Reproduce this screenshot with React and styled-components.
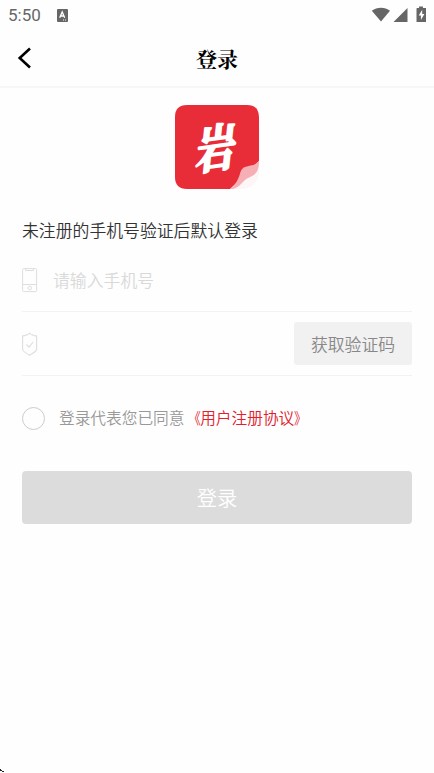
import React, { useState } from "react";
import styled, { createGlobalStyle } from "styled-components";

const GlobalStyle = createGlobalStyle`
  * {
    box-sizing: border-box;
  }
  body {
    margin: 0;
    background: #fff;
    font-family: "Noto Sans CJK SC", sans-serif;
    font-weight: 350;
    overflow: hidden;
  }
`;

const Screen = styled.div`
  position: relative;
  display: flex;
  flex-direction: column;
  height: 773px;
  background: #fefefe;
`;

const StatusBar = styled.div`
  display: flex;
  align-items: center;
  height: 30px;
  padding: 0 7px 0 8px;
  color: #666;
  font: 400 17px/30px Roboto, sans-serif;
  svg {
    display: block;
  }
`;

const Clock = styled.span`
  width: 49px;
`;

const StatusIcons = styled.div`
  display: flex;
  margin-left: auto;
`;

const Header = styled.header`
  display: grid;
  grid-template-columns: 60px 1fr 60px;
  align-items: center;
  height: 58px;
  border-bottom: 2px solid #f7f7f7;
`;

const BackButton = styled.button`
  display: flex;
  padding: 0 0 0 17px;
  border: 0;
  background: none;
`;

const Title = styled.h1`
  margin: 0;
  font: 700 21px/30px "Noto Serif CJK SC", "Noto Sans CJK SC", serif;
  color: #000;
  text-align: center;
`;

const Form = styled.form`
  display: flex;
  flex-direction: column;
  padding: 17px 22px 0;
`;

const Logo = styled.svg`
  display: block;
  align-self: center;
  overflow: visible;
`;

const Hint = styled.p`
  margin: 28px 0 0;
  font-size: 16.85px;
  line-height: 26px;
  color: #333;
`;

const Field = styled.div`
  display: flex;
  align-items: center;
  height: ${({ $height }) => $height}px;
  padding-top: ${({ $offset }) => $offset || 0}px;
  border-bottom: 1px solid #f2f2f2;
`;

const Input = styled.input`
  flex: 1;
  min-width: 0;
  margin-left: 15px;
  padding: 0;
  border: 0;
  outline: 0;
  background: none;
  font: 350 16.85px/26px "Noto Sans CJK SC", sans-serif;
  color: #333;
  &::placeholder {
    color: #d9d9d9;
    opacity: 1;
  }
`;

const CodeButton = styled.button`
  width: 118px;
  height: 43px;
  padding: 0;
  border: 0;
  border-radius: 3px;
  background: #f1f1f1;
  color: #888;
  font: 350 16.85px/42px "Noto Sans CJK SC", sans-serif;
`;

const Agreement = styled.div`
  display: flex;
  align-items: center;
  margin-top: 30px;
  height: 24px;
  font-size: 15.7px;
  line-height: 24px;
  color: #999;
  white-space: nowrap;
`;

const Radio = styled.span`
  width: 23px;
  height: 23px;
  margin-right: 14px;
  border: 1.5px solid ${({ $checked }) => ($checked ? "#e82d38" : "#ccc")};
  border-radius: 50%;
`;

const Link = styled.span`
  color: #e1202c;
`;

const Bracket = styled.span`
  display: inline-block;
  transform: scaleX(0.8);
  transform-origin: ${({ $open }) => ($open ? "right" : "left")} center;
`;

const Submit = styled.button`
  height: 53px;
  margin-top: 41px;
  padding: 0 0 2px;
  border: 0;
  border-radius: 4px;
  background: #dcdcdc;
  color: #fff;
  font: 350 20.3px/50px "Noto Sans CJK SC", sans-serif;
`;

const Corner = styled.svg`
  position: absolute;
  left: 0;
  bottom: 0;
`;

const KeyboardIcon = () => (
  <svg width="11" height="13" viewBox="0 0 11 13">
    <rect width="11" height="13" rx="1" fill="#666" />
    <path d="M2.7 8.8 5.2 3 7.7 8.8M3.6 7H6.8" fill="none" stroke="#fff" strokeWidth="1.3" />
    <path d="M6 11h1M8 11h1" stroke="#fff" />
  </svg>
);

const SignalIcons = () => (
  <svg width="56" height="18" viewBox="0 0 56 18" fill="#666">
    <path d="M.8 4.8C6 .8 14 .8 19 4.8L10 15.5z" />
    <path d="M36.5 2V16H22.5z" />
    <path d="M46 2h2V.5h4V2h3V16H45.5V3q0-1 .5-1z" />
    <path d="M51.2 3.8 47.7 9.5h2.2v4.5L53.4 8h-2.2z" fill="#fff" />
  </svg>
);

const PhoneIcon = () => (
  <svg width="16" height="25" viewBox="0 0 16 25" fill="none" stroke="#dedede">
    <rect x=".6" y=".6" width="14" height="23" rx="1" />
    <path d="M3.5 1v1.5h8V1M.5 16.5h14" />
    <circle cx="7.7" cy="20" r="1.8" />
  </svg>
);

const ShieldIcon = () => (
  <svg width="16" height="24" viewBox="0 0 16 24" fill="none" stroke="#dedede" strokeWidth="1.1">
    <path d="M.6 3.8Q3 4 4.5 2.8Q5.5 3.5 7.6 1Q9.6 3.5 10.8 2.8Q12 4 14.6 3.8V17.5Q14 19.5 7.6 23.3Q1 19.5 .6 17.5z" />
    <path d="m4.5 12.5 2.6 2.7 4-5.2" />
  </svg>
);

const BrandLogo = () => (
  <Logo width="84" height="84" viewBox="0 0 84 84">
    <path d="M12 0H72Q84 0 84 12V57L57 84H12Q0 84 0 72V12Q0 0 12 0z" fill="#e82d38" />
    <path d="M84 56V68Q82 82 68 84H55z" fill="#fdf5f6" />
    <path
      d="M84 56C80 61 75 60 70 62C65 64 66 68 63 74C61 78 59 82 55 84L58 84C65 82 67 77 72 73.5C79 70 84 69 84 56z"
      fill="#f6b0b5"
    />
    <text
      x="0"
      y="0"
      fill="#fff"
      stroke="#fff"
      strokeWidth="2.2"
      strokeLinejoin="round"
      fontFamily="Noto Serif CJK SC, Noto Sans CJK SC, serif"
      fontSize="46"
      fontWeight="700"
      textAnchor="middle"
      transform="translate(39.5 62) rotate(-8) skewX(-14) scale(.86 1.08)"
    >
      岩
    </text>
  </Logo>
);

const App = () => {
  const [phone, setPhone] = useState("");
  const [code, setCode] = useState("");
  const [checked, setChecked] = useState(false);

  return (
    <Screen>
      <GlobalStyle />
      <StatusBar>
        <Clock>5:50</Clock>
        <KeyboardIcon />
        <StatusIcons>
          <SignalIcons />
        </StatusIcons>
      </StatusBar>
      <Header>
        <BackButton>
          <svg width="16" height="24" viewBox="0 0 16 24" fill="none" stroke="#000" strokeWidth="2.6">
            <path d="M13 2.5 2.7 12 13 21.5" />
          </svg>
        </BackButton>
        <Title>登录</Title>
      </Header>
      <Form onSubmit={(event) => event.preventDefault()}>
        <BrandLogo />
        <Hint>未注册的手机号验证后默认登录</Hint>
        <Field $height={69} $offset={6}>
          <PhoneIcon />
          <Input
            placeholder="请输入手机号"
            value={phone}
            onChange={(event) => setPhone(event.target.value)}
          />
        </Field>
        <Field $height={64}>
          <ShieldIcon />
          <Input value={code} onChange={(event) => setCode(event.target.value)} />
          <CodeButton type="button">获取验证码</CodeButton>
        </Field>
        <Agreement onClick={() => setChecked(!checked)}>
          <Radio $checked={checked} />
          登录代表您已同意
          <Link>
            <Bracket $open>《</Bracket>用户注册协议<Bracket>》</Bracket>
          </Link>
        </Agreement>
        <Submit>登录</Submit>
      </Form>
      <Corner width="4" height="5" viewBox="0 0 4 5">
        <path d="M0 1h1v1h1v1h2v1H2V3H0z" fill="#222" />
      </Corner>
    </Screen>
  );
};

export default App;
